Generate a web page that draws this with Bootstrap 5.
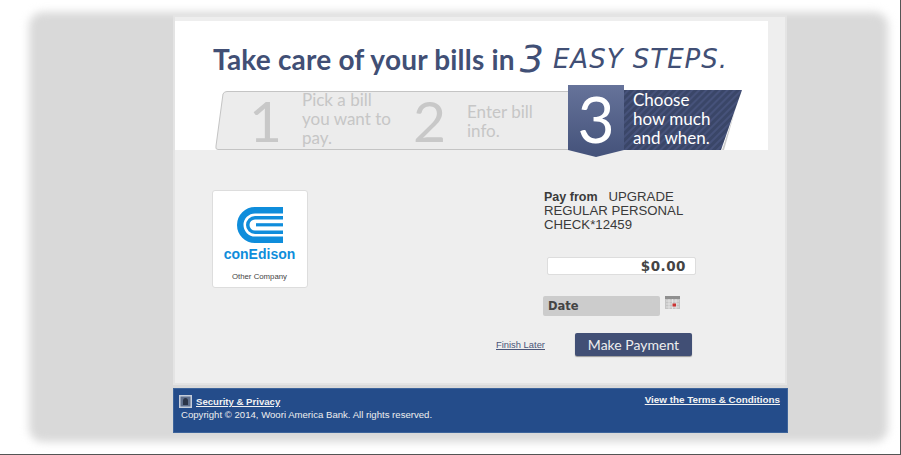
<!doctype html>
<html lang="en"><head><meta charset="utf-8"><title>Make Payment</title>
<link href="https://cdn.jsdelivr.net/npm/bootstrap@5.3.0/dist/css/bootstrap.min.css" rel="stylesheet">
<style>
html,body{margin:0;background:#fff;overflow:hidden}
.shot{width:901px;height:455px;border-bottom:1px solid #555;border-right:1px solid #555;padding:12px 12px 12px 29px;font-family:"Liberation Sans",Arial,sans-serif}
.backdrop{position:relative;isolation:isolate;height:430px;padding:3px 0 0 144px}
.backdrop::before{content:"";position:absolute;inset:0;z-index:-1;background:#d9d9d9;border-radius:14px;filter:blur(4px)}
.panel-x{width:614px;height:370px;background:#eee;border:2px solid #e4e4e4;display:flex;flex-direction:column}
.head-x{width:593px;height:129px;margin:4px 0 0 0;background:#fff;display:flex;flex-direction:column;padding-left:38px;flex:none}
.title-x{height:70px;display:flex;align-items:center;color:#414f75;white-space:nowrap;padding-top:5px}
.title-a{font:700 28px/1 Lato,sans-serif;letter-spacing:.2px}
.title-3{font:italic 400 38px/1 "DejaVu Sans",sans-serif;margin:0 9px 0 5px}
.title-b{font:italic 400 26px/1 "DejaVu Sans",sans-serif;letter-spacing:1px}
.steps-x{position:relative;height:58px;width:529px;margin-left:2px;flex:none;display:flex;align-items:center;font-family:Lato,sans-serif}
.band-svg{position:absolute;left:0;top:-6px;overflow:visible}
.stepnum{position:relative;font-weight:400;font-size:57px;line-height:1;color:#c8c8c8;flex:none}
.steptxt{position:relative;font-size:17px;line-height:19px;color:#c6c6c6;flex:none}
.n1{margin-left:34px;width:53px}.t1{width:111px;margin-top:-3px}
.n2{width:54px}.t2{width:101px;margin-top:1px}
.n3{width:56px;text-align:center;color:#fff;font-size:64px;margin-top:-2px}
.t3{color:#fff;margin:-3px 0 0 9px}
.body-x{position:relative;flex:1;display:flex;padding:40px 0 0 37px}
.logo-x{width:96px;height:98px;background:#fff;border:1px solid #ddd;border-radius:3px;display:flex;flex-direction:column;align-items:center;padding-top:16px;padding-right:1px;flex:none}
.ced{font:700 14px/1 "Liberation Sans",sans-serif;color:#0f8ddb;margin-top:4px}
.oc{font-size:7.800px;line-height:1;color:#444;margin-top:12px}
.pay-x{margin-left:236px;width:160px;display:flex;flex-direction:column;flex:none}
.payfrom{font-size:13.200px;line-height:14px;color:#3a3a3a;width:158px}
.payfrom b{font-size:12.500px;margin-right:11px}
.amt.form-control{width:149px;height:18px;margin:25px 0 0 3px;padding:0 9px;min-height:0;border:1px solid #ddd;border-radius:2px;text-align:right;font:700 13.500px/1 "DejaVu Sans",sans-serif;color:#444;letter-spacing:.5px;box-shadow:none}
.date-row{display:flex;gap:5px;margin-top:21px;margin-left:-1px}
.date-x{width:117px;height:20px;background:#ccc;border-radius:2px;padding-left:5px;font:700 11.500px/21px "DejaVu Sans",sans-serif;color:#444}
.act-row{display:flex;align-items:center;margin:17px 0 0 -48px;width:220px}
.later{font:9.400px/1 "Liberation Sans",sans-serif;color:#4a5578;width:79px;text-decoration:underline}
.btn.mk{width:117px;height:23px;padding:0;border:0;border-radius:2px;background:#414f75;color:#eee;font:400 14px/23px Lato,sans-serif;box-shadow:0 1px 1px #999}
.foot-x{width:615px;height:45px;margin-top:3px;background:#244c8a;color:#eee;border:1px solid #3d649b;display:flex;justify-content:space-between;font-size:9.600px;line-height:1;padding:6px 7px 0 5px}
.foot-x a{color:#f2f2f2;font-weight:700;text-decoration:underline}
.foot-x>a{font-size:9.850px}
.sec{display:flex;align-items:center;gap:4px}
.copy{margin:2px 0 0 2px}
</style></head><body>
<div class="shot"><div class="backdrop">
<div class="panel-x">
 <div class="head-x">
  <div class="title-x"><span class="title-a">Take care of your bills in</span><span class="title-3">3</span><span class="title-b">EASY STEPS.</span></div>
  <div class="steps-x">
   <svg class="band-svg" width="529" height="72" viewBox="0 0 529 72" aria-hidden="true">
    <defs>
     <linearGradient id="bg3" x1="0" y1="0" x2="0" y2="1"><stop offset="0" stop-color="#66739a"/><stop offset="1" stop-color="#44527a"/></linearGradient>
     <pattern id="hatch" width="5" height="5" patternUnits="userSpaceOnUse" patternTransform="rotate(45)"><rect width="5" height="5" fill="#3a4668"/><rect width="2" height="5" fill="#46527a"/></pattern>
    </defs>
    <path d="M12 6.500H380V64.500H3Q0 64.500 1 61L8 9Q9 6.500 12 6.500Z" fill="#ececec" stroke="#c4c4c4"/>
    <path d="M408 5H527L506 65H408Z" fill="url(#hatch)"/>
    <path d="M507 65L527 5L520 26L509 65Z" fill="#ccc"/>
    <path d="M353 0H409V65L381 72L353 65Z" fill="url(#bg3)"/>
   </svg>
   <span class="stepnum n1">1</span><span class="steptxt t1">Pick a bill<br>you want to<br>pay.</span>
   <span class="stepnum n2">2</span><span class="steptxt t2">Enter bill<br>info.</span>
   <span class="stepnum n3">3</span><span class="steptxt t3">Choose<br>how much<br>and when.</span>
  </div>
 </div>
 <div class="body-x">
  <div class="logo-x">
   <svg width="46" height="36" viewBox="0 0 46 36" aria-hidden="true"><g fill="none" stroke="#0f8ddb"><path d="M46 3.250H18A14.750 14.750 0 0 0 18 32.750H46" stroke-width="6.500"/><path d="M46 10.750H18A7.250 7.250 0 0 0 18 25.250H46" stroke-width="3.500"/><path d="M46 17.800H19" stroke-width="3.200"/></g></svg>
   <div class="ced">conEdison</div><div class="oc">Other Company</div>
  </div>
  <div class="pay-x">
   <div class="payfrom"><div class="d-flex"><b>Pay from</b><span>UPGRADE</span></div><div>REGULAR PERSONAL</div><div>CHECK*12459</div></div>
   <input class="form-control amt" value="$0.00" aria-label="Amount">
   <div class="date-row"><div class="date-x">Date</div>
    <svg width="15" height="13" viewBox="0 0 15 13" aria-hidden="true"><rect width="15" height="13" fill="#c4c4c4"/><rect width="15" height="3" fill="#8f8f8f"/><path d="M1 5H14M1 8H14M1 11H14M4 3V13M7.500 3V13M11 3V13" stroke="#e8e8e8" stroke-width=".8"/><rect x="7.500" y="7.500" width="3.500" height="3" fill="#c33"/></svg></div>
   <div class="act-row"><a class="later" href="#">Finish Later</a><button class="btn mk" type="button">Make Payment</button></div>
  </div>
 </div>
</div>
<div class="foot-x">
 <div><div class="sec"><svg width="13" height="13" viewBox="0 0 13 13" aria-hidden="true"><rect width="13" height="13" fill="#c5cddb"/><rect x="1.500" y="1.500" width="10" height="10" fill="#5f6f8c"/><path d="M4 10V6Q4 3 6.500 3T9 6V10Z" fill="#2c3548"/></svg><a href="#">Security &amp; Privacy</a></div><div class="copy">Copyright © 2014, Woori America Bank. All rights reserved.</div></div>
 <a href="#">View the Terms &amp; Conditions</a>
</div>
</div></div>
<script src="https://cdn.jsdelivr.net/npm/bootstrap@5.3.0/dist/js/bootstrap.bundle.min.js"></script>
</body></html>
